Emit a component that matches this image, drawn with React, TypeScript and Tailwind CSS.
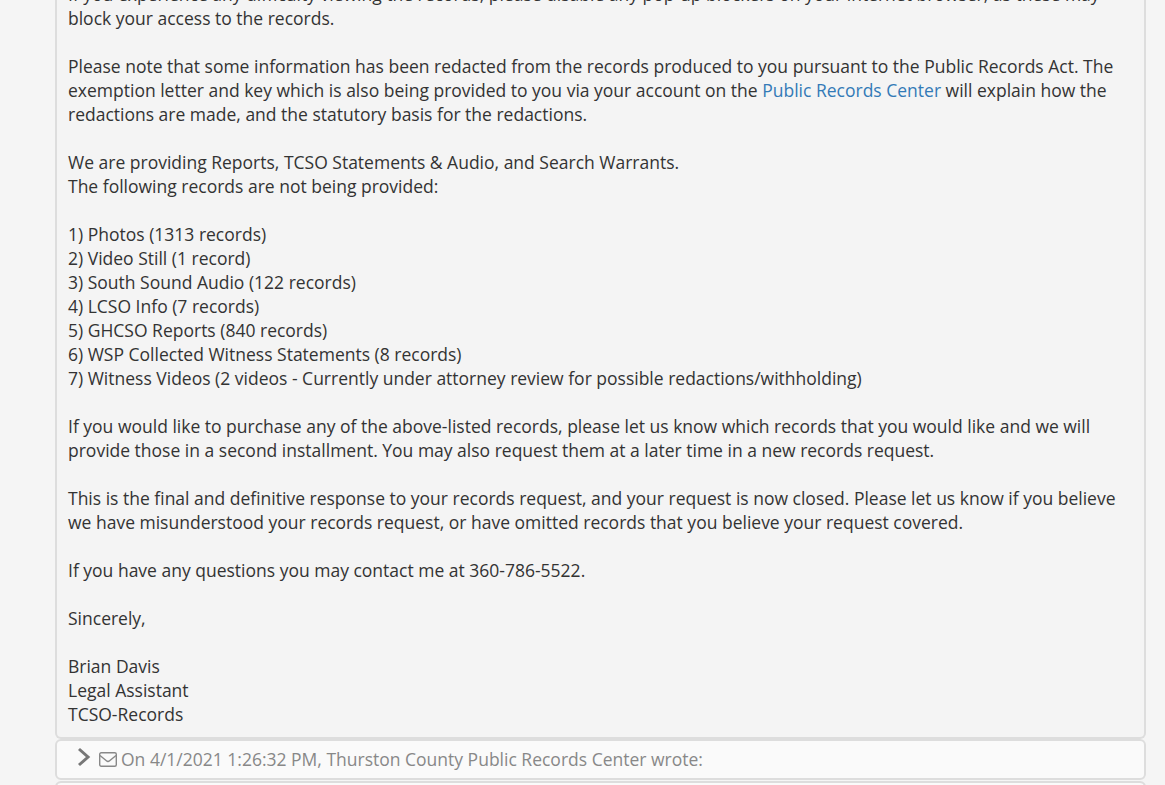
import React from 'react';

const font = { fontFamily: '"Open Sans", sans-serif' };

const Lines: React.FC<{ lines: string[]; last?: boolean }> = ({ lines, last }) => (
  <p className={last ? '' : 'mb-6'}>
    {lines.map((l) => (
      <span key={l} className="block">{l}</span>
    ))}
  </p>
);

const App: React.FC = () => {
  return (
    <div className="h-[785px] overflow-hidden bg-[#f5f5f5] text-[#333] text-[17.5px] leading-6" style={font}>
      <div className="-mt-[18px] ml-[55px] mr-[19px]">
        <div className="border-2 border-t-0 border-[#dddddd] rounded-b-[6px] bg-[#f4f4f4] pl-[11px] pr-[11px] pt-0 pb-[11px]">
          <Lines lines={['If you experience any difficulty viewing the records, please disable any pop-up blockers on your internet browser, as these may', 'block your access to the records.']} />
          <p className="mb-6">
            Please note that some information has been redacted from the records produced to you pursuant to the Public Records Act. The exemption letter and key which is also being provided to you via your account on the{' '}
            <a className="text-[#337ab7]">Public Records Center</a> will explain how the redactions are made, and the statutory basis for the redactions.
          </p>
          <Lines lines={['We are providing Reports, TCSO Statements & Audio, and Search Warrants.', 'The following records are not being provided:']} />
          <Lines lines={['1) Photos (1313 records)', '2) Video Still (1 record)', '3) South Sound Audio (122 records)', '4) LCSO Info (7 records)', '5) GHCSO Reports (840 records)', '6) WSP Collected Witness Statements (8 records)', '7) Witness Videos (2 videos - Currently under attorney review for possible redactions/withholding)']} />
          <p className="mb-6">If you would like to purchase any of the above-listed records, please let us know which records that you would like and we will provide those in a second installment. You may also request them at a later time in a new records request.</p>
          <p className="mb-6">This is the final and definitive response to your records request, and your request is now closed. Please let us know if you believe we have misunderstood your records request, or have omitted records that you believe your request covered.</p>
          <p className="mb-6">If you have any questions you may contact me at 360-786-5522.</p>
          <p className="mb-6">Sincerely,</p>
          <Lines last lines={['Brian Davis', 'Legal Assistant', 'TCSO-Records']} />
        </div>
        <div className="h-[41px] border-2 border-[#dddddd] rounded-[6px] bg-[#fafafa] flex items-center pl-[20px] pb-[2px] text-[#888]">
          <svg width="14" height="20" viewBox="0 0 14 20" fill="none" stroke="#777" strokeWidth="3" className="mr-[8px] mb-[3px]">
            <path d="M2 2l9 8-9 8" />
          </svg>
          <svg width="18" height="15" viewBox="0 0 18 15" fill="none" stroke="#888" strokeWidth="1.4" className="mr-[4px] mt-[2px]">
            <rect x="0.7" y="0.7" width="16.6" height="13.6" rx="1.5" />
            <path d="M1 3.5l6.4 5.3a2.5 2.5 0 0 0 3.2 0L17 3.5" />
          </svg>
          <span>On 4/1/2021 1:26:32 PM, Thurston County Public Records Center wrote:</span>
        </div>
        <div className="mt-[1px] h-[41px] border-2 border-[#dddddd] rounded-[6px] bg-[#fafafa]" />
      </div>
    </div>
  );
};

export default App;
